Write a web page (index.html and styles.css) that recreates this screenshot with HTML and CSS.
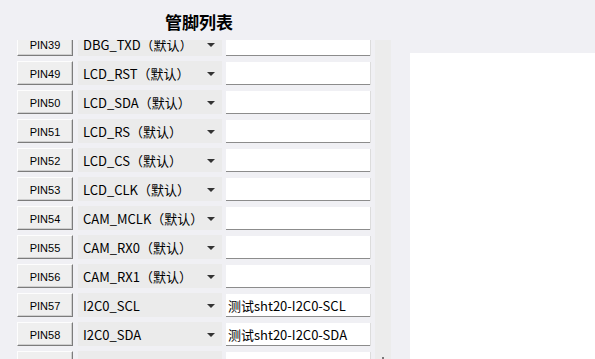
FILE: index.html
```html
<!DOCTYPE html>
<html lang="zh-CN">
<head>
    <meta charset="UTF-8">
    <title>管脚列表</title>
    <link rel="stylesheet" href="styles.css">
</head>
<body>
    <div class="left">
        <h1 class="title">管脚列表</h1>
        <div class="list-wrap">
            <div class="list">
                <div class="rows">
                    <div class="row"><button class="pin">PIN39</button><div class="func">DBG_TXD（默认）<span class="arrow"></span></div><div class="note"></div></div>
                    <div class="row"><button class="pin">PIN49</button><div class="func">LCD_RST（默认）<span class="arrow"></span></div><div class="note"></div></div>
                    <div class="row"><button class="pin">PIN50</button><div class="func">LCD_SDA（默认）<span class="arrow"></span></div><div class="note"></div></div>
                    <div class="row"><button class="pin">PIN51</button><div class="func">LCD_RS（默认）<span class="arrow"></span></div><div class="note"></div></div>
                    <div class="row"><button class="pin">PIN52</button><div class="func">LCD_CS（默认）<span class="arrow"></span></div><div class="note"></div></div>
                    <div class="row"><button class="pin">PIN53</button><div class="func">LCD_CLK（默认）<span class="arrow"></span></div><div class="note"></div></div>
                    <div class="row"><button class="pin">PIN54</button><div class="func">CAM_MCLK（默认）<span class="arrow"></span></div><div class="note"></div></div>
                    <div class="row"><button class="pin">PIN55</button><div class="func">CAM_RX0（默认）<span class="arrow"></span></div><div class="note"></div></div>
                    <div class="row"><button class="pin">PIN56</button><div class="func">CAM_RX1（默认）<span class="arrow"></span></div><div class="note"></div></div>
                    <div class="row"><button class="pin">PIN57</button><div class="func">I2C0_SCL<span class="arrow"></span></div><div class="note">测试sht20-I2C0-SCL</div></div>
                    <div class="row"><button class="pin">PIN58</button><div class="func">I2C0_SDA<span class="arrow"></span></div><div class="note">测试sht20-I2C0-SDA</div></div>
                    <div class="row"><button class="pin"></button><div class="func"><span class="arrow"></span></div><div class="note"></div></div>
                </div>
            </div>
            <div class="track"><span class="track-arrow"></span></div>
        </div>
    </div>
    <div class="right"></div>
</body>
</html>
```
FILE: styles.css
```css
html, body {
  margin: 0;
  height: 100%;
  overflow: hidden;
}
body {
  background-color: #f0f0f4;
  color: #000;
  font-family: "Noto Sans CJK SC", "Liberation Sans", sans-serif;
  font-size: 13px;
  display: flex;
  gap: 19px;
}
.left {
  width: 391px;
  display: flex;
  flex-direction: column;
}
.title {
  margin: 0;
  height: 40px;
  width: 398px;
  line-height: 44px;
  text-align: center;
  font-size: 17px;
  font-weight: bold;
}
.list-wrap {
  flex: 1;
  display: flex;
  min-height: 0;
}
.list {
  width: 375px;
  overflow: hidden;
}
.rows {
  margin-top: -8px;
}
.row {
  height: 24px;
  margin-bottom: 5px;
  padding-left: 17px;
  display: flex;
  align-items: stretch;
}
.pin {
  width: 56px;
  margin: 0;
  padding: 2px 0 0;
  background: #efefef;
  border: 1px solid;
  border-color: #fdfdfd #7c7c7c #7c7c7c #fdfdfd;
  box-shadow: inset -1px -1px 0 #cfcfcf;
  font-family: "Liberation Sans", Arial, sans-serif;
  font-size: 11px;
  color: #000;
}
.func {
  width: 144px;
  margin-left: 5px;
  background: #ebebeb;
  padding-left: 5px;
  box-sizing: border-box;
  display: flex;
  align-items: center;
  position: relative;
  white-space: nowrap;
}
.arrow {
  position: absolute;
  right: 7px;
  top: 11px;
  width: 0;
  height: 0;
  border-left: 4px solid transparent;
  border-right: 4px solid transparent;
  border-top: 4px solid #333;
}
.note {
  width: 144px;
  margin-left: 4px;
  margin-top: 1px;
  background: #fff;
  border-bottom: 1px solid #8c8c8c;
  box-shadow: 1px 0 0 #dcdcdc;
  box-sizing: border-box;
  padding-left: 2px;
  display: flex;
  align-items: center;
  white-space: nowrap;
}
.track {
  width: 16px;
  background: #ececec;
  position: relative;
}
.track-arrow {
  position: absolute;
  left: 7px;
  bottom: 0;
  width: 2px;
  height: 2px;
  background: #777;
}
.right {
  flex: 1;
  margin-top: 53px;
  background: #fff;
}
```
